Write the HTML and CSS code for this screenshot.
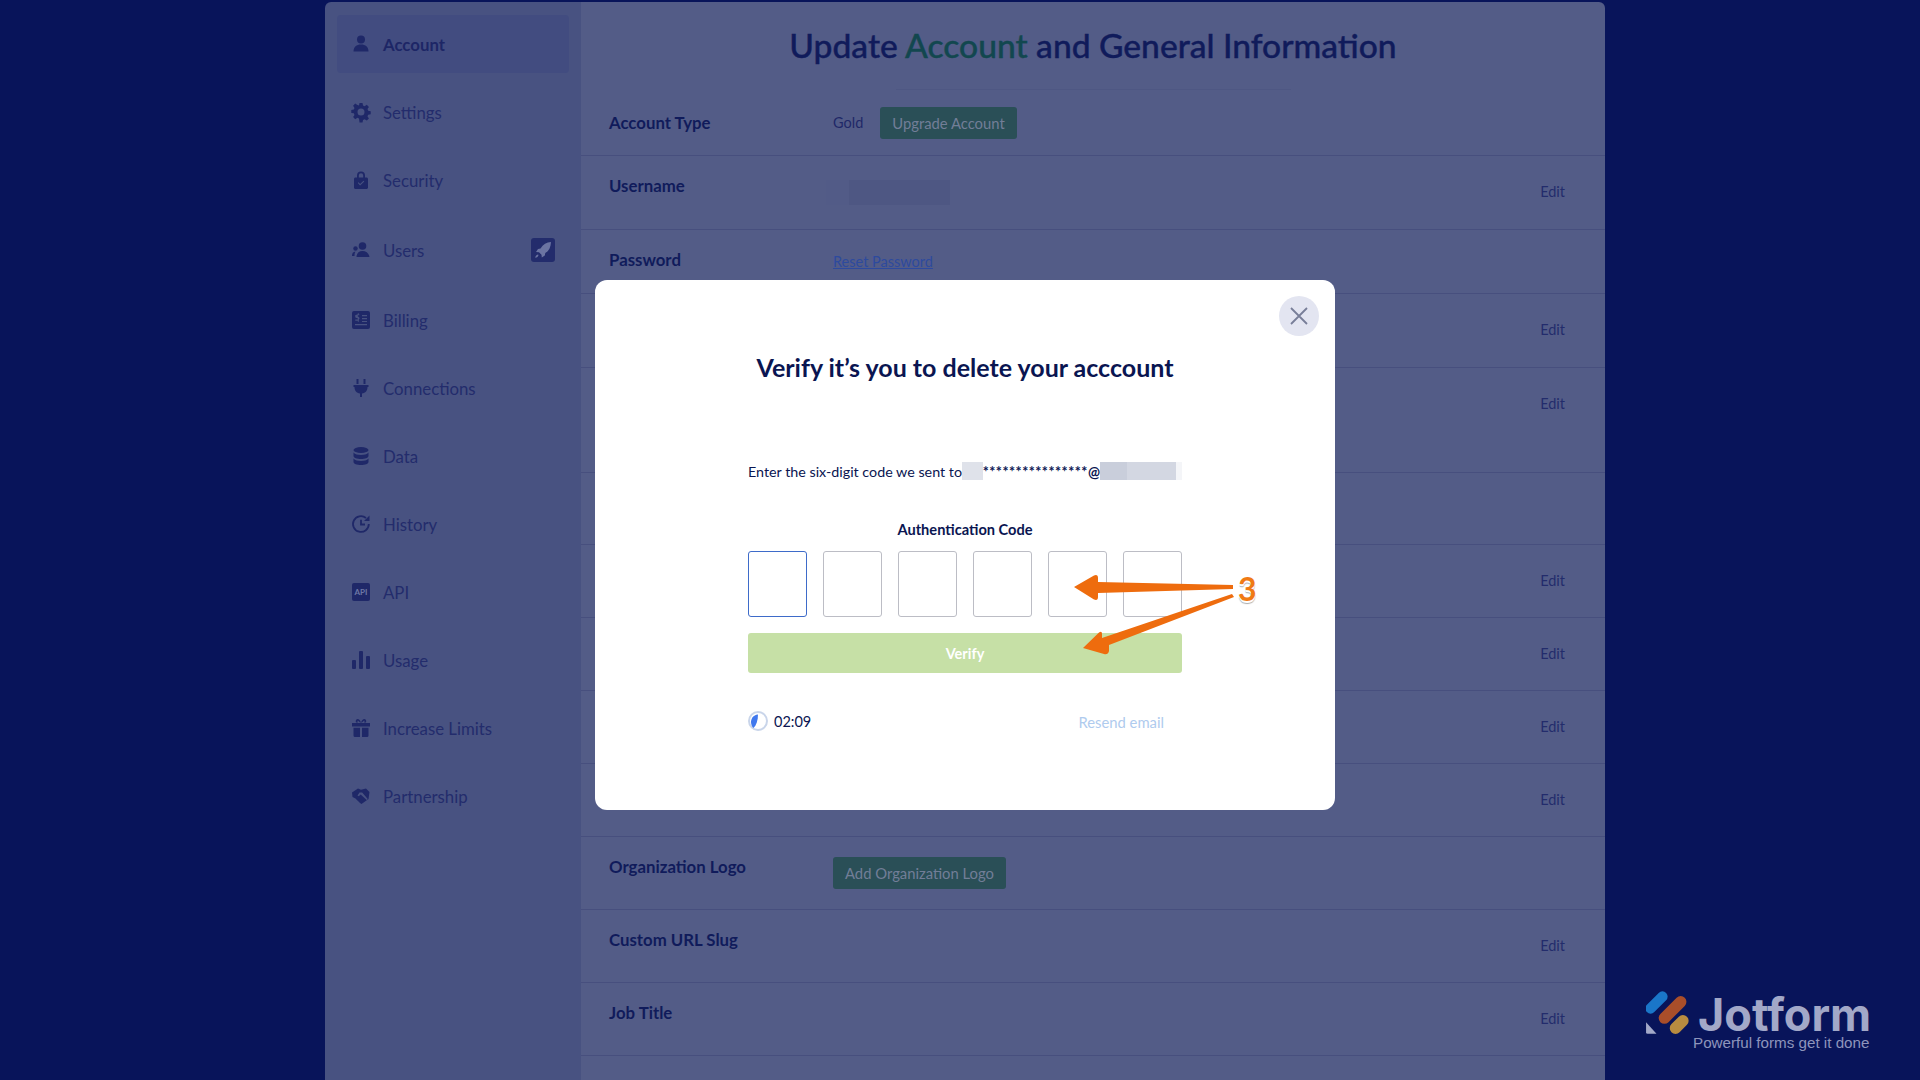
FILE: index.html
```html
<!DOCTYPE html>
<html lang="en">
<head>
  <meta charset="UTF-8" />
  <title>Update Account and General Information</title>
  <link rel="stylesheet" href="styles.css">
</head>
<body>
  <div class="panel">
    <!-- Sidebar -->
    <nav class="sidebar">
      <a class="nav-item active">
        <svg class="nav-icon" viewBox="0 0 18 18"><circle cx="9" cy="4.500" r="4"/><path d="M1.500 16.500c0-4.500 3-7 7.500-7s7.500 2.500 7.500 7z"/></svg>
        <span>Account</span>
      </a>
      <a class="nav-item">
        <svg class="nav-icon" viewBox="0 0 18 18"><path fill-rule="evenodd" d="M7.500 0h3l.5 2.500 1.600.7 2.200-1.400 2.100 2.100-1.400 2.200.7 1.600 2.500.5v3l-2.500.5-.7 1.600 1.400 2.200-2.100 2.100-2.200-1.400-1.600.7-.5 2.500h-3L7 15.500l-1.600-.7-2.200 1.400-2.100-2.100 1.400-2.200-.7-1.600L-.7 10V7l2.500-.5.7-1.600L1.100 2.700l2.100-2.100 2.200 1.400L7 2.500zM9 5.500a3.500 3.500 0 1 0 0 7 3.500 3.500 0 0 0 0-7z"/></svg>
        <span>Settings</span>
      </a>
      <a class="nav-item">
        <svg class="nav-icon" viewBox="0 0 18 18"><path fill-rule="evenodd" d="M5 6.500V4.500a4 4 0 0 1 8 0v2h1.500c.8 0 1.500.7 1.500 1.500v8.500c0 .8-.7 1.500-1.500 1.500h-11C2.700 18 2 17.300 2 16.500V8c0-.8.7-1.500 1.500-1.500zM6.800 6.500h4.400v-2a2.200 2.200 0 0 0-4.400 0zM5.800 12l2.300 2.500 4.200-4-.8-.8-3.400 3.200-1.500-1.600z"/></svg>
        <span>Security</span>
      </a>
      <a class="nav-item nav-users">
        <svg class="nav-icon" viewBox="0 0 18 18"><circle cx="10.500" cy="5" r="3.800"/><circle cx="3.500" cy="7.500" r="2.200"/><path d="M4.500 16c0-3.800 2.500-6 6-6s6.500 2.200 7 6zM0 15c0-2.700 1-4.300 3.500-4.500-.8 1.200-1 2.800-1 4.500z"/></svg>
        <span>Users</span>
        <svg class="rocket" viewBox="0 0 24 24"><rect width="24" height="24" rx="3"/><path class="rocket-body" d="M20 4c-4.500.3-8 2.300-10.500 6.500L7 11l-2 3 3 .3 2.500 2.500.3 2.800 3-2 .5-2.500C18 13 19.800 9 20 4zM7 16.500c-1.500.3-2.500 1.500-2.800 3.300 1.800-.2 3-1.200 3.300-2.800z"/></svg>
      </a>
      <a class="nav-item">
        <svg class="nav-icon" viewBox="0 0 18 18"><path fill-rule="evenodd" d="M2 0h14a2 2 0 0 1 2 2v14a2 2 0 0 1-2 2H2a2 2 0 0 1-2-2V2a2 2 0 0 1 2-2zM3 13v1.300h12V13zM10 4v1.200h5V4zm0 3v1.200h5V7zm0 3v1h5v-1zM3.200 4.300v1.200c0 1 .8 1.500 2.600 1.800v1.300H3.300v1.100h2.500v1h1V8.600c.5-.2.700-.7.700-1.300 0-1-.7-1.500-1.700-1.800V4.300h1.500V3.200H6.800v-1h-1v1z"/></svg>
        <span>Billing</span>
      </a>
      <a class="nav-item">
        <svg class="nav-icon" viewBox="0 0 18 18"><path d="M4.500 0h2v5h-2zM11.500 0h2v5h-2zM1.500 6h15v2h-1c0 3.500-2 6-5.500 6.500V18H8v-3.500C4.500 14 2.500 11.500 2.500 8h-1z"/></svg>
        <span>Connections</span>
      </a>
      <a class="nav-item">
        <svg class="nav-icon" viewBox="0 0 18 18"><ellipse cx="9" cy="3" rx="7.500" ry="3"/><path d="M1.500 5.500C3 7.300 6 8 9 8s6-.7 7.500-2.500V9c0 1.700-3.400 3-7.500 3S1.500 10.700 1.500 9zM1.500 11.500C3 13.300 6 14 9 14s6-.7 7.500-2.500V15c0 1.700-3.400 3-7.500 3s-7.500-1.300-7.500-3z"/></svg>
        <span>Data</span>
      </a>
      <a class="nav-item">
        <svg class="nav-icon" viewBox="0 0 18 18"><path class="stroked" d="M16.800 9A7.900 7.900 0 1 1 14 3M9 4.800V9.500h4"/><path d="M17.500.5v5.500h-5.500z"/></svg>
        <span>History</span>
      </a>
      <a class="nav-item">
        <svg class="nav-icon" viewBox="0 0 18 18"><rect width="18" height="18" rx="2"/><text class="api-label" x="9" y="12">API</text></svg>
        <span>API</span>
      </a>
      <a class="nav-item">
        <svg class="nav-icon" viewBox="0 0 18 18"><rect y="9" width="4" height="9" rx="1"/><rect x="7" width="4" height="18" rx="1"/><rect x="14" y="5" width="4" height="13" rx="1"/></svg>
        <span>Usage</span>
      </a>
      <a class="nav-item">
        <svg class="nav-icon" viewBox="0 0 18 18"><path fill-rule="evenodd" d="M0 4h18v3.500H0zM1.500 8.800h6.500V18H3a1.500 1.500 0 0 1-1.500-1.500zM10 8.800h6.500v7.700A1.500 1.500 0 0 1 15 18h-5zM4 3.500C3 1 5 -.5 6.500.2 7.700.8 8.500 2 9 3.500 9.500 2 10.300.8 11.500.2 13-.5 15 1 14 3.500h-2c1-1.500.3-2-.3-1.600-.7.500-1.200 1-1.700 1.600H8c-.5-.6-1-1.100-1.700-1.600C5.700 1.500 5 2 6 3.500z"/></svg>
        <span>Increase Limits</span>
      </a>
      <a class="nav-item">
        <svg class="nav-icon" viewBox="0 0 18 18"><path d="M6 1.500l3 1.300 5-1.300 3.500 3.500-1 7L9.500 17 8 16l-2-2-2.500-2.500L.5 10 0 5.500zM7.500 5.500l-2 3 1.200.7 2-1.700 6 5.500 1-1-5.500-6.500z"/></svg>
        <span>Partnership</span>
      </a>
    </nav>

    <!-- Main content -->
    <main class="content">
      <header class="page-head">
        <h1>Update <em>Account</em> and General Information</h1>
        <div class="head-line"></div>
      </header>

      <div class="row row-type">
        <div class="row-label">Account Type</div>
        <div class="row-value type-value"><span class="gold">Gold</span><button class="green-btn">Upgrade Account</button></div>
      </div>
      <div class="row row-first">
        <div class="row-label">Username</div>
        <div class="row-value"><span class="blur-name"><i></i></span></div>
        <a class="edit">Edit</a>
      </div>
      <div class="row row-pass">
        <div class="row-label">Password</div>
        <div class="row-value"><a class="reset">Reset Password</a></div>
      </div>
      <div class="row row-first"><a class="edit">Edit</a></div>
      <div class="row row-tall"><a class="edit">Edit</a></div>
      <div class="row row-short"></div>
      <div class="row"><a class="edit">Edit</a></div>
      <div class="row"><a class="edit">Edit</a></div>
      <div class="row"><a class="edit">Edit</a></div>
      <div class="row"><a class="edit">Edit</a></div>
      <div class="row">
        <div class="row-label">Organization Logo</div>
        <div class="row-value logo-value"><button class="green-btn">Add Organization Logo</button></div>
      </div>
      <div class="row">
        <div class="row-label">Custom URL Slug</div>
        <a class="edit">Edit</a>
      </div>
      <div class="row">
        <div class="row-label">Job Title</div>
        <a class="edit">Edit</a>
      </div>
    </main>
  </div>

  <!-- Verify modal -->
  <div class="modal">
    <button class="close-btn" aria-label="Close">
      <svg viewBox="0 0 20 20"><path d="M2 2l16 16M18 2L2 18"/></svg>
    </button>
    <h2>Verify it’s you to delete your acccount</h2>
    <p class="sent-to">Enter the six-digit code we sent to<span class="blur-a"></span><span class="stars">****************@</span><span class="blur-b"></span></p>
    <div class="code-label">Authentication Code</div>
    <div class="code-boxes">
      <div class="code-box focused"></div>
      <div class="code-box"></div>
      <div class="code-box"></div>
      <div class="code-box"></div>
      <div class="code-box"></div>
      <div class="code-box"></div>
    </div>
    <button class="verify-btn">Verify</button>
    <div class="modal-foot">
      <div class="timer">
        <svg viewBox="0 0 20 20"><circle cx="10" cy="10" r="9" class="timer-ring"/><path class="timer-fill" d="M10 3.500C5 4 3 8 3 11c0 2.500 1 5 2.500 6C8.500 14 10 9 10 3.500z"/></svg>
        <span>02:09</span>
      </div>
      <a class="resend">Resend email</a>
    </div>
  </div>

  <!-- Annotation arrows -->
  <svg class="arrows" viewBox="0 0 200 100">
    <path d="M4 27 L24 15.500 Q28 14 28 18 L28 22 L163 25 L163 29 L28 33 L28 37 Q28 41 24 39.500z"/>
    <path d="M13 88 L29 72.500 Q32 70.500 32 74 L32 78 L162 34 L164 37 L39 85 L39 91 Q38 95 34 94z"/>
  </svg>
  <div class="step-num">3</div>

  <!-- Brand -->
  <div class="brand">
    <svg class="brand-mark" viewBox="0 0 42 44">
      <rect class="m-blue" x="-3" y="6" width="26" height="10" rx="5" transform="rotate(-45 10 11)"/>
      <rect class="m-orange" x="9" y="13" width="33" height="11" rx="5.500" transform="rotate(-45 25 18.500)"/>
      <rect class="m-yellow" x="21" y="27" width="21" height="11" rx="5.500" transform="rotate(-45 31 32)"/>
      <path class="m-grey" d="M0 30l10 11H1.500A1.500 1.500 0 0 1 0 39.500z"/>
    </svg>
    <div class="brand-text">
      <div class="brand-name">Jotform</div>
      <div class="brand-tag">Powerful forms get it done</div>
    </div>
  </div>
</body>
</html>
```

FILE: styles.css
```css
* {
  box-sizing: border-box;
}

html, body {
  height: 100%;
  overflow: hidden;
}

body {
  margin: 0;
  background: #08145a;
  font-family: 'Lato', 'Liberation Sans', sans-serif;
  color: #0a1551;
}

.panel {
  display: flex;
  width: 1280px;
  height: 1078px;
  margin: 2px 0 0 325px;
  border-radius: 6px 6px 0 0;
  overflow: hidden;
}

/* Sidebar */
.sidebar {
  width: 256px;
  flex-shrink: 0;
  background: #485281;
  padding: 13px 12px;
}

.nav-item {
  display: flex;
  align-items: center;
  gap: 13px;
  height: 58px;
  padding: 0 15px;
  margin-bottom: 10px;
  border-radius: 4px;
  font-size: 16.800px;
  color: #232c6c;
}

.nav-item.active {
  background: #424c80;
  font-weight: 700;
  color: #1d2666;
}

.nav-users {
  margin-top: 12px;
  margin-bottom: 12px;
}

.nav-icon {
  width: 18px;
  height: 18px;
  flex-shrink: 0;
  fill: #1f2868;
  overflow: visible;
}

.stroked {
  fill: none;
  stroke: #1f2868;
  stroke-width: 1.800;
}

.api-label {
  fill: #6e78a6;
  font-size: 8px;
  font-weight: 700;
  text-anchor: middle;
}

.rocket {
  width: 24px;
  height: 24px;
  margin-left: auto;
  margin-right: -1px;
  fill: #232c6c;
}

.rocket-body {
  fill: #6b74a2;
}

/* Content */
.content {
  flex: 1;
  background: #535c87;
}

.page-head {
  height: 88px;
  padding-top: 21px;
  text-align: center;
}

.page-head h1 {
  margin: 0;
  font-size: 33.600px;
  line-height: 44px;
  font-weight: 500;
  color: #101b5b;
  -webkit-text-stroke: 0.4px;
}

.page-head em {
  font-style: normal;
  color: #12474f;
}

.head-line {
  width: 395px;
  height: 1px;
  margin: 22px auto 0;
  background: #4e5783;
}

.row {
  display: flex;
  align-items: flex-start;
  height: 73px;
  padding: 20px 40px 0 28px;
  border-bottom: 1px solid #474f7e;
}

.row-type {
  height: 66px;
  padding-top: 0;
  align-items: center;
}

.row-first {
  height: 74px;
}

.row-pass {
  height: 64px;
}

.row-tall {
  height: 105px;
}

.row-short {
  height: 72px;
}

.row-label {
  width: 224px;
  flex-shrink: 0;
  font-size: 16.800px;
  line-height: 20px;
  font-weight: 700;
  color: #101b5b;
}

.row-value {
  margin-top: 2px;
  font-size: 14.500px;
  line-height: 20px;
  color: #1f2868;
}

.type-value {
  display: flex;
  align-items: center;
  margin-top: 0;
}

.logo-value {
  margin-top: 0;
}

.edit {
  margin-left: auto;
  margin-top: 6px;
  font-size: 14.500px;
  line-height: 20px;
  color: #232c6c;
}

.gold {
  margin-right: 17px;
}

.green-btn {
  height: 32px;
  padding: 0 12px;
  border: 0;
  border-radius: 3px;
  background: #2a4f57;
  color: #727e97;
  font-family: inherit;
  font-size: 14.800px;
}

.blur-name {
  display: block;
  width: 124px;
  height: 25px;
  margin: 2px 0 0 -7px;
  padding-left: 23px;
  background: #525b87;
}

.blur-name i {
  display: block;
  width: 101px;
  height: 25px;
  background: #4e5783;
}

.reset {
  color: #2d4a9e;
  text-decoration: underline;
}

/* Modal */
.modal {
  position: absolute;
  left: 595px;
  top: 280px;
  width: 740px;
  height: 530px;
  padding: 0 153px;
  background: #fff;
  border-radius: 12px;
}

.close-btn {
  position: absolute;
  top: 16px;
  right: 16px;
  width: 40px;
  height: 40px;
  padding: 10px;
  border: 0;
  border-radius: 50%;
  background: #e3e5f1;
}

.close-btn svg {
  display: block;
  stroke: #787e98;
  stroke-width: 1.800;
  fill: none;
}

.modal h2 {
  margin: 0;
  padding-top: 71px;
  font-size: 25px;
  line-height: 32px;
  font-weight: 700;
  text-align: center;
  white-space: nowrap;
}

.sent-to {
  display: flex;
  align-items: center;
  height: 18px;
  margin: 79px 0 0;
  font-size: 14.300px;
  white-space: nowrap;
}

.stars {
  letter-spacing: 0.5px;
  font-weight: 700;
}

.blur-a {
  width: 21px;
  height: 18px;
  background: #dfe2ea;
}

.blur-b {
  width: 83px;
  height: 18px;
  background: linear-gradient(to right, #c9cedb 27px, #d3d7e2 27px, #d3d7e2 76px, #f4f5f8 76px);
}

.code-label {
  margin-top: 40px;
  font-size: 14.600px;
  line-height: 20px;
  font-weight: 700;
  text-align: center;
}

.code-boxes {
  display: flex;
  gap: 16px;
  margin-top: 11px;
}

.code-box {
  width: 59px;
  height: 66px;
  border: 1px solid #bcbdc5;
  border-radius: 3px;
}

.code-box.focused {
  border-color: #3e6bc9;
}

.verify-btn {
  display: block;
  width: 434px;
  height: 40px;
  margin-top: 16px;
  border: 0;
  border-radius: 3px;
  background: #c6e0a6;
  color: #fff;
  font-family: inherit;
  font-size: 14.500px;
  font-weight: 700;
}

.modal-foot {
  display: flex;
  align-items: center;
  justify-content: space-between;
  margin-top: 38px;
  padding-right: 18px;
}

.timer {
  display: flex;
  align-items: center;
  gap: 6px;
  font-size: 14.500px;
}

.timer svg {
  width: 20px;
  height: 20px;
}

.timer-ring {
  fill: #fff;
  stroke: #c9d5ea;
  stroke-width: 2;
}

.timer-fill {
  fill: #3f78ee;
}

.resend {
  margin-top: 2px;
  font-size: 14.800px;
  color: #afcbee;
}

/* Arrows */
.arrows {
  position: absolute;
  left: 1070px;
  top: 560px;
  width: 200px;
  height: 100px;
  fill: #ee6c0e;
  overflow: visible;
}

.step-num {
  position: absolute;
  left: 1238px;
  top: 569px;
  font-size: 32px;
  line-height: 40px;
  font-weight: 700;
  color: #f07a14;
  text-shadow: 0 2px 0 #fff, 0 3px 1px #aaa;
}

/* Brand */
.brand {
  position: absolute;
  left: 1646px;
  top: 990px;
  display: flex;
  gap: 8px;
}

.brand-mark {
  width: 44px;
  height: 46px;
  margin-top: 1px;
}

.m-blue { fill: #1a76c9; }
.m-orange { fill: #a94e2a; }
.m-yellow { fill: #b98c40; }
.m-grey { fill: #a3a9c9; }

.brand-name {
  margin-top: 5px;
  font-family: 'Inter', 'Liberation Sans', sans-serif;
  font-size: 45px;
  line-height: 39px;
  font-weight: 700;
  color: #a2a8c8;
}

.brand-tag {
  margin-left: -5px;
  font-family: 'Liberation Sans', sans-serif;
  font-size: 15.200px;
  line-height: 18px;
  color: #8e95bc;
  white-space: nowrap;
}
```
